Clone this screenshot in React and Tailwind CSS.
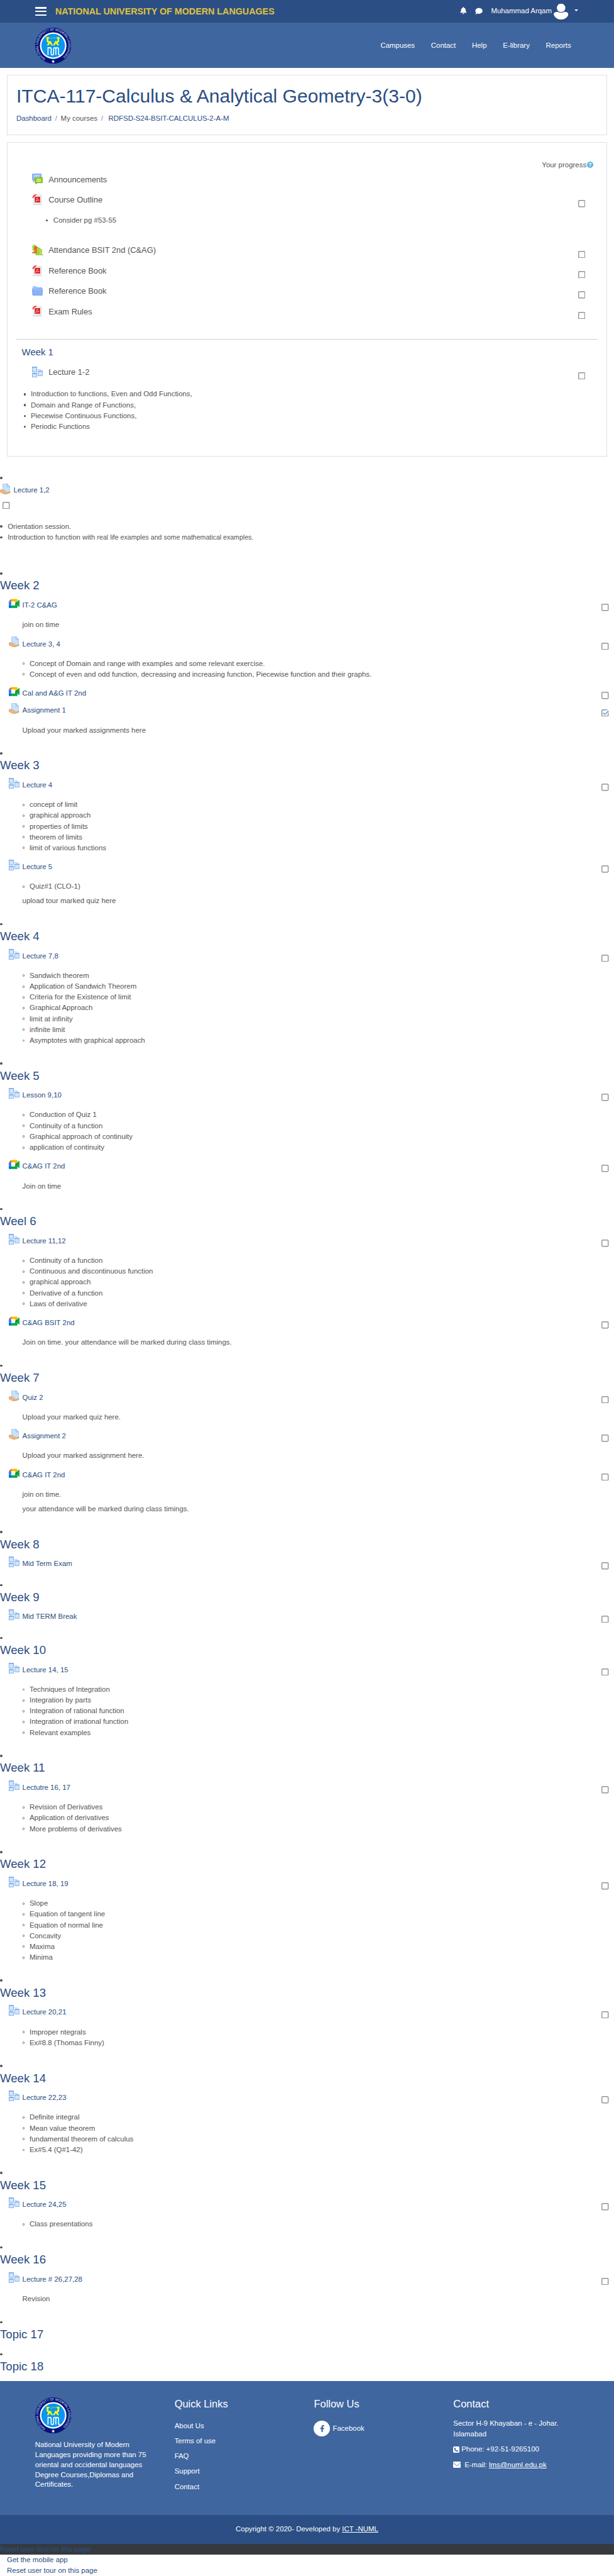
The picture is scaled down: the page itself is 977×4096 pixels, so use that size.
import React from "react";
import { FaBell, FaComment, FaFacebookF } from "react-icons/fa";

/* ---------- icons ---------- */

function LogoSeal() {
  return (
    <svg viewBox="0 0 80 80" className="block h-[80px] w-[80px] shrink-0">
      <defs>
        <path id="ring" d="M22.6 68.6 A33.5 33.5 0 1 1 57.4 68.6" />
      </defs>
      <circle cx="40" cy="40" r="40" fill="#06127a" />
      <circle cx="40" cy="40" r="29.5" fill="#fff" />
      <circle cx="40" cy="40" r="26.3" fill="#0a96f2" />
      <text fill="#dfe6f5" fontSize="7.3" fontFamily="Liberation Sans, sans-serif" fontWeight="400">
        <textPath href="#ring" textLength="168" lengthAdjust="spacing">
          NATIONAL UNIVERSITY OF MODERN LANGUAGES
        </textPath>
      </text>
      <path
        d="M40 71 l1 2.9 h3 l-2.4 1.8 .9 2.9 -2.5-1.8 -2.5 1.8 .9-2.9 -2.4-1.8 h3z"
        fill="#fff"
      />
      <g fill="#ffff00">
        <path d="M25 21 h6 v2.5 h-1.5 v6.5 h6 v2.5 l4 7 h-3.5 l-3-4.5 -3.5 4.5 h-3.5 l3-5.5 -3-2.5z" />
        <path d="M54 21 h-6 v2.5 h1.5 v6.5 h-6 v2.5 l-4 7 h3.5 l3-4.5 3.5 4.5 h3.5 l-3-5.5 3-2.5z" />
      </g>
      <path d="M31 22.5 q4 3 8.5 0.5 t8.5 0" fill="none" stroke="#d8f000" strokeWidth="0.9" />
      <path
        d="M28.5 60.5 V44.5 H33.5 Q35.5 44.5 35.5 47 V57.5 Q35.5 60.5 38 60.5 Q41 60.5 41 57.5 V47 Q41 44.5 43.5 44.5 Q46 44.5 46 47 V60.5 M46 47 Q46 44.5 48.5 44.5 Q52 44.5 52 47 V59 Q52 60.5 55 60.3"
        fill="none"
        stroke="#fff"
        strokeWidth="2.3"
      />
    </svg>
  );
}

const ICON = "block h-[24px] w-[24px] shrink-0";

function BookIcon() {
  return (
    <svg viewBox="0 0 24 24" className={ICON}>
      <path d="M11 6.5 H18.5 V9 M5.5 11 V15" fill="none" stroke="#9cc0f2" strokeWidth="1.2" />
      <g fill="#cfe6fb" stroke="#6495e6" strokeWidth="1">
        <rect x="0.5" y="0.5" width="10" height="11" />
        <rect x="13.5" y="9.5" width="10" height="10.5" />
        <rect x="0.5" y="14.5" width="10" height="9" />
      </g>
      <path d="M1 1.5h9M14 10.5h9M1 15.5h9" stroke="#7fa9ee" strokeWidth="1.6" />
    </svg>
  );
}

function HandIcon() {
  return (
    <svg viewBox="0 0 24 24" className={ICON}>
      <path d="M6.5 0.5 H16 L21.5 6.5 V21 H6.5z" fill="#c6e3fb" stroke="#8fb8ec" />
      <path d="M16 0.5 V6.5 H21.5z" fill="#eaf5ff" stroke="#6f9fe6" />
      <path
        d="M0.5 14 Q3 13.3 6 14 L13 17 Q15.5 18.3 13.5 19 L10 18.6 L14 20 Q19 18 23.2 18.6 Q23.5 19.8 20 21 Q14 24.5 9 23 L0.5 19z"
        fill="#efb57c"
        stroke="#c98d50"
        strokeWidth="0.8"
      />
      <path d="M9.5 17.5 Q13 17 15 19.5" fill="none" stroke="#fbe0c2" strokeWidth="1" />
    </svg>
  );
}

function MeetIcon() {
  return (
    <svg viewBox="0 0 24 24" className={ICON}>
      <path d="M0 7.5 L5.5 2 V7.5z" fill="#ea4335" />
      <path d="M5.5 2 H17.5 Q19.3 2 19.3 3.8 V8 L14 12 V7.5 H5.5z" fill="#ffba00" />
      <path d="M0 7.5 H5.5 V16.5 H0z" fill="#2684fc" />
      <path d="M0 16.5 H5.5 V22 H1.7 Q0 22 0 20.3z" fill="#0066da" />
      <path d="M5.5 16.5 H14 V12 L19.3 16.5 V20.3 Q19.3 22 17.5 22 H5.5z" fill="#00ac47" />
      <path d="M14 12 L19.3 7.5 V16.5z" fill="#00832d" />
      <path d="M19.3 7.5 L22.7 4.6 Q24 3.9 24 5.3 V18.7 Q24 20.1 22.7 19.4 L19.3 16.5z" fill="#00ac47" />
    </svg>
  );
}

function PdfIcon() {
  return (
    <svg viewBox="0 0 24 24" className={ICON}>
      <path d="M2 1 H22 V18 L16.5 23 H2z" fill="#e9e9ee" />
      <path d="M2 22.5 H18 L22 21.5 V23.5 H2z" fill="#c9c9ce" />
      <path d="M22 18 L16.5 23 V18z" fill="#fff" stroke="#bdbdc4" strokeWidth="0.6" />
      <path d="M1 8.5 V6 Q3 1 8 0 H11 L1 9z" fill="#ee4036" />
      <rect x="6" y="5.5" width="12" height="12.5" fill="#dd1f1f" />
      <path
        d="M11.5 7.5 Q12 11 15.8 13.8 Q11 12.6 8 15.5 Q11.5 12 11.5 7.5z"
        fill="none"
        stroke="#fff"
        strokeWidth="0.8"
      />
    </svg>
  );
}

function FolderIcon() {
  return (
    <svg viewBox="0 0 24 24" className={ICON}>
      <path d="M2.5 10 V2.5 H9.5 L11.5 4.5 H21.5 V10z" fill="#a9c9fa" stroke="#6b9bea" />
      <path d="M0.5 7.5 H23.5 L22.5 21.5 H1.5z" fill="#8bb2f6" stroke="#5f8fe2" />
      <path d="M1.5 8.7 H22.5" stroke="#c2d9fd" />
    </svg>
  );
}

function ForumIcon() {
  return (
    <svg viewBox="0 0 24 24" className={ICON}>
      <path d="M1.5 0.5 H20.5 V14 H6 L2.5 18.5 V14 H0.5 V1.5z" fill="#8fb6f8" stroke="#6b9bea" />
      <path d="M4 4.5H17M4 7.5H17" stroke="#fff" strokeWidth="1.2" />
      <path
        d="M7.5 8.5 H22.5 Q23.5 8.5 23.5 9.5 V20.5 H12 L8.5 23.5 V20.5 H6.5 V9.5z"
        fill="#8ccb12"
        stroke="#6ba50e"
      />
      <path d="M10 12.5H20M10 15H20M10 17.5H20" stroke="#fff" strokeWidth="1.2" />
    </svg>
  );
}

function AttendanceIcon() {
  return (
    <svg viewBox="0 0 24 24" className={ICON}>
      <g stroke="#79ae1c" strokeWidth="0.9">
        <path d="M0.5 12 L2.5 9 Q0.5 6 1.5 3 Q4.5 -1 7.5 2 Q9 5 7.5 9 L9 12z" fill="#a8dd3c" />
        <path
          d="M0.5 18.5 L1.5 16.5 L6 15 Q4 10 5.5 5 Q8.5 1.5 11.5 5 Q12.5 10 10 14 L14 18z"
          fill="#ee6a1e"
          stroke="#d4570f"
        />
        <path d="M6 21 L11 18.5 Q9 13 11 8 Q14 4.5 17 8 V19 L17 21z" fill="#a8dd3c" />
        <path
          d="M9 23.5 Q10 20.5 16 19.5 Q13.5 14 15 11 Q18.5 7 21.5 11 Q23 15 20.5 19.5 Q23 20 23.5 23.5z"
          fill="#b4e34b"
        />
      </g>
    </svg>
  );
}

const ICONS = {
  book: BookIcon,
  hand: HandIcon,
  meet: MeetIcon,
  pdf: PdfIcon,
  folder: FolderIcon,
  forum: ForumIcon,
  people: AttendanceIcon,
};

/* ---------- small parts ---------- */

function Check({ on, className }) {
  return (
    <span className={"block h-[16px] w-[16px] shrink-0 " + className}>
      <svg viewBox="0 0 16 16" className="block h-full w-full">
        <rect x="1" y="1" width="14" height="14" rx="1.5" fill="#fff" stroke="#949494" strokeWidth="2" />
        {on && (
          <>
            <path d="M13 0 h3 v8 h-3z" fill="#fff" />
            <path d="M3.8 7.5 L7.3 11 L15.5 3.8" fill="none" stroke="#76a1f0" strokeWidth="2.5" />
          </>
        )}
      </svg>
    </span>
  );
}

function Disc() {
  return <span className="block h-[5px] w-[5px] shrink-0 rounded-full bg-[#505050]" />;
}

function DiscItem({ gap, children }) {
  return (
    <li className={"flex h-[24px] items-center " + gap}>
      <Disc />
      <span>{children}</span>
    </li>
  );
}

function CardRow({ icon, title, check = true }) {
  const Icon = ICONS[icon];
  return (
    <div className="flex h-[45.33px] items-start pr-[48px] pl-[55px]">
      <div className="pt-[5px]">
        <Icon />
      </div>
      <span className="flex-1 pt-[4px] pl-[12.5px] text-[18px] leading-[27px]">{title}</span>
      {check && <Check className="mt-[18px]" />}
    </div>
  );
}

function Activity({ icon, title, on, items, notes }) {
  const Icon = ICONS[icon];
  const hasBody = items || notes;
  return (
    <div>
      <div className={"flex items-start pr-[11.5px] pl-[19px] " + (hasBody ? "h-[51.4px]" : "h-[38px]")}>
        <div className="pt-[3.6px]">
          <Icon />
        </div>
        <a className="flex-1 pt-[7.8px] pl-[6.7px] leading-[24px] text-[#2a4d82]">{title}</a>
        <Check on={on} className="mt-[16.4px]" />
      </div>
      {hasBody && (
        <div className="flex flex-col gap-[8px] pb-[10.6px] pl-[49.7px]">
          {items && (
            <ul>
              {items.map((t) => (
                <li key={t} className="flex h-[24px] items-center gap-[11px]">
                  <span className="block h-[5.5px] w-[5px] rounded-full border border-[#666]" />
                  <span>{t}</span>
                </li>
              ))}
            </ul>
          )}
          {notes && notes.map((t) => <p key={t}>{t}</p>)}
        </div>
      )}
    </div>
  );
}

function Section({ title, acts }) {
  return (
    <section className="pb-[16.6px]">
      <div className="flex h-[24px] items-center">
        <Disc />
      </div>
      <h3 className="h-[31.2px] text-[26px] leading-[31.2px] text-[#2a4d82]">{title}</h3>
      {acts && (
        <div className="pt-[8px]">
          {acts.map((a, i) => (
            <Activity key={i} {...a} />
          ))}
        </div>
      )}
    </section>
  );
}

/* ---------- content ---------- */

const SECTIONS = [
  {
    title: "Week 2",
    acts: [
      { icon: "meet", title: "IT-2 C&AG", notes: ["join on time"] },
      {
        icon: "hand",
        title: "Lecture 3, 4",
        items: [
          "Concept of Domain and range with examples and some relevant exercise.",
          "Concept of even and odd function, decreasing and increasing function, Piecewise function and their graphs.",
        ],
      },
      { icon: "meet", title: "Cal and A&G IT 2nd" },
      { icon: "hand", title: "Assignment 1", on: true, notes: ["Upload your marked assignments here"] },
    ],
  },
  {
    title: "Week 3",
    acts: [
      {
        icon: "book",
        title: "Lecture 4",
        items: ["concept of limit", "graphical approach", "properties of limits", "theorem of limits", "limit of various functions"],
      },
      { icon: "book", title: "Lecture 5", items: ["Quiz#1 (CLO-1)"], notes: ["upload tour marked quiz here"] },
    ],
  },
  {
    title: "Week 4",
    acts: [
      {
        icon: "book",
        title: "Lecture 7,8",
        items: [
          "Sandwich theorem",
          "Application of Sandwich Theorem",
          "Criteria for the Existence of limit",
          "Graphical Approach",
          "limit at infinity",
          "infinite limit",
          "Asymptotes with graphical approach",
        ],
      },
    ],
  },
  {
    title: "Week 5",
    acts: [
      {
        icon: "book",
        title: "Lesson 9,10",
        items: ["Conduction of Quiz 1", "Continuity of a function", "Graphical approach of continuity", "application of continuity"],
      },
      { icon: "meet", title: "C&AG IT 2nd", notes: ["Join on time"] },
    ],
  },
  {
    title: "Weel 6",
    acts: [
      {
        icon: "book",
        title: "Lecture 11,12",
        items: [
          "Continuity of a function",
          "Continuous and discontinuous function",
          "graphical approach",
          "Derivative of a function",
          "Laws of derivative",
        ],
      },
      { icon: "meet", title: "C&AG BSIT 2nd", notes: ["Join on time. your attendance will be marked during class timings."] },
    ],
  },
  {
    title: "Week 7",
    acts: [
      { icon: "hand", title: "Quiz 2", notes: ["Upload your marked quiz here."] },
      { icon: "hand", title: "Assignment 2", notes: ["Upload your marked assignment here."] },
      {
        icon: "meet",
        title: "C&AG IT 2nd",
        notes: ["join on time.", "your attendance will be marked during class timings."],
      },
    ],
  },
  { title: "Week 8", acts: [{ icon: "book", title: "Mid Term Exam" }] },
  { title: "Week 9", acts: [{ icon: "book", title: "Mid TERM Break" }] },
  {
    title: "Week 10",
    acts: [
      {
        icon: "book",
        title: "Lecture 14, 15",
        items: [
          "Techniques of Integration",
          "Integration by parts",
          "Integration of rational function",
          "Integration of irrational function",
          "Relevant examples",
        ],
      },
    ],
  },
  {
    title: "Week 11",
    acts: [
      {
        icon: "book",
        title: "Lectutre 16, 17",
        items: ["Revision of Derivatives", "Application of derivatives", "More problems of derivatives"],
      },
    ],
  },
  {
    title: "Week 12",
    acts: [
      {
        icon: "book",
        title: "Lecture 18, 19",
        items: ["Slope", "Equation of tangent line", "Equation of normal line", "Concavity", "Maxima", "Minima"],
      },
    ],
  },
  {
    title: "Week 13",
    acts: [{ icon: "book", title: "Lecture 20,21", items: ["Improper ntegrals", "Ex#8.8 (Thomas Finny)"] }],
  },
  {
    title: "Week 14",
    acts: [
      {
        icon: "book",
        title: "Lecture 22,23",
        items: ["Definite integral", "Mean value theorem", "fundamental theorem of calculus", "Ex#5.4 (Q#1-42)"],
      },
    ],
  },
  { title: "Week 15", acts: [{ icon: "book", title: "Lecture 24,25", items: ["Class presentations"] }] },
  { title: "Week 16", acts: [{ icon: "book", title: "Lecture # 26,27,28", notes: ["Revision"] }] },
  { title: "Topic 17" },
  { title: "Topic 18" },
];

/* ---------- page blocks ---------- */

function Header() {
  return (
    <header className="text-white">
      <div className="flex h-[50px] items-start bg-[#2b4f84] pl-[78px]">
        <div className="mt-[16px] flex w-[25px] flex-col gap-[5px]">
          <span className="h-[3px] rounded-[1px] bg-white" />
          <span className="h-[3px] rounded-[1px] bg-white" />
          <span className="h-[3px] rounded-[1px] bg-white" />
        </div>
        <span className="ml-[20px] flex-1 pt-[10.5px] text-[20px] leading-[30px] font-bold whitespace-nowrap text-[#e0c23f]">
          NATIONAL UNIVERSITY OF MODERN LANGUAGES
        </span>
        <FaBell className="mt-[16px] h-[16px] w-[15px]" />
        <FaComment className="mt-[17px] ml-[19px] h-[16px] w-[17px]" />
        <span className="ml-[18px] pt-[12px] leading-[24px] whitespace-nowrap">Muhammad Arqam</span>
        <svg viewBox="0 0 33 35" className="mt-[8px] ml-[4px] h-[35px] w-[33px]" fill="#fff">
          <circle cx="16.5" cy="9" r="9.5" />
          <path d="M8 18 Q16.5 22 25 18 Q33 18.5 33 24 Q28 35 16.5 35 Q5 35 0 24 Q0 18.5 8 18z" />
        </svg>
        <span className="mt-[21px] mr-[79px] ml-[14px] h-0 w-0 border-x-[4.2px] border-t-[4.5px] border-x-transparent border-t-white" />
      </div>
      <div className="h-px bg-white" />
      <div className="flex h-[100px] items-start justify-between bg-[#3f669f] pt-[10px] pr-[95.5px] pl-[78px]">
        <LogoSeal />
        <nav className="flex gap-[36px] pt-[28px] leading-[24px]">
          <a>Campuses</a>
          <a>Contact</a>
          <a>Help</a>
          <a>E-library</a>
          <a>Reports</a>
        </nav>
      </div>
    </header>
  );
}

function TitleCard() {
  return (
    <div className="mx-[15px] mt-[16px] h-[133px] border border-[#dee2e6] px-[20px] pt-[20px]">
      <h1 className="text-[42px] leading-[50px] whitespace-nowrap text-[#2a4d82]">
        ITCA-117-Calculus &amp; Analytical Geometry-3(3-0)
      </h1>
      <div className="mt-[13px] flex leading-[24px] text-[#2a4d82]">
        <a>Dashboard</a>
        <span className="px-[8px] text-[#868e96]">/</span>
        <span className="text-[#555]">My courses</span>
        <span className="pr-[12px] pl-[8px] text-[#868e96]">/</span>
        <a>RDFSD-S24-BSIT-CALCULUS-2-A-M</a>
      </div>
    </div>
  );
}

function MainCard() {
  return (
    <div className="mx-[15px] mt-[16px] h-[698px] border border-[#dee2e6]">
      <div className="flex items-center justify-end gap-[1px] pt-[37px] pr-[30px]">
        <span>Your progress</span>
        <span className="flex h-[14px] w-[14px] items-center justify-center rounded-full bg-[#5bb6da] text-[12px] leading-[14px] font-bold text-white">
          ?
        </span>
      </div>
      <div className="pt-[3px]">
        <CardRow icon="forum" title="Announcements" check={false} />
        <CardRow icon="pdf" title="Course Outline" />
        <ul className="h-[67px] pt-[6.2px] pl-[85px]">
          <DiscItem gap="gap-[12px]">Consider pg #53-55</DiscItem>
        </ul>
        <CardRow icon="people" title="Attendance BSIT 2nd (C&AG)" />
        <CardRow icon="pdf" title="Reference Book" />
        <CardRow icon="folder" title="Reference Book" />
        <CardRow icon="pdf" title="Exam Rules" />
      </div>
      <div className="mx-[20px] mt-[33px] h-px bg-[#ced2d5]" />
      <h4 className="mt-[17.5px] pl-[32px] text-[20.8px] leading-[25px] text-[#2a4d82]">Week 1</h4>
      <div className="pt-[12.7px]">
        <CardRow icon="book" title="Lecture 1-2" />
      </div>
      <ul className="pt-[9.6px] pl-[36.5px]">
        <DiscItem gap="gap-[10.5px]">Introduction to functions, Even and Odd Functions,</DiscItem>
        <DiscItem gap="gap-[10.5px]">Domain and Range of Functions,</DiscItem>
        <DiscItem gap="gap-[10.5px]">Piecewise Continuous Functions,</DiscItem>
        <DiscItem gap="gap-[10.5px]">Periodic Functions</DiscItem>
      </ul>
    </div>
  );
}

function LooseLecture() {
  return (
    <div className="h-[248.3px] pt-[36.2px]">
      <div className="flex h-[24px] items-center">
        <Disc />
      </div>
      <div className="flex h-[41px] items-start">
        <HandIcon />
        <a className="pt-[4px] pl-[6px] text-[#2a4d82]">Lecture 1,2</a>
      </div>
      <Check className="ml-[6px]" />
      <ul className="pt-[27px]">
        <DiscItem gap="gap-[12px]">Orientation session.</DiscItem>
        <DiscItem gap="gap-[12px]">
          Introduction to function with <span className="text-[14.8px]">real life examples and some mathematical examples.</span>
        </DiscItem>
      </ul>
    </div>
  );
}

function Footer() {
  return (
    <footer className="text-white">
      <div className="flex h-[297px] bg-[#3f669f] pl-[78px]">
        <div className="w-[310px] pt-[36px]">
          <LogoSeal />
          <p className="w-[255px] pt-[15.5px] leading-[22px]">
            National University of Modern Languages providing more than 75 oriental and occidental languages Degree
            Courses,Diplomas and Certificates.
          </p>
        </div>
        <div className="w-[310px] pt-[35.5px]">
          <h5 className="text-[23px] leading-[28px]">Quick Links</h5>
          <ul className="flex flex-col gap-[10px] pt-[23.5px]">
            <li>About Us</li>
            <li>Terms of use</li>
            <li>FAQ</li>
            <li>Support</li>
            <li>Contact</li>
          </ul>
        </div>
        <div className="w-[310px] pt-[35.5px]">
          <h5 className="text-[23px] leading-[28px]">Follow Us</h5>
          <div className="mt-[23.5px] flex items-center gap-[6px]">
            <span className="flex h-[36px] w-[36px] items-center justify-center rounded-full bg-white">
              <FaFacebookF className="h-[16px] w-[16px] text-[#3f669f]" />
            </span>
            <span>Facebook</span>
          </div>
        </div>
        <div className="w-[270px] pt-[35.5px]">
          <h5 className="text-[23px] leading-[28px]">Contact</h5>
          <p className="pt-[18.5px]">
            Sector H-9 Khayaban - e - Johar.
            <br />
            Islamabad
          </p>
          <div className="mt-[10px] flex items-center gap-[4px]">
            <svg viewBox="0 0 14 14" className="h-[14px] w-[14px]">
              <rect width="14" height="14" rx="2.5" fill="#fff" />
              <path
                d="M4.5 2.5 l1.5 2.8 -1 1 q1 1.9 2.7 2.7 l1-1 2.8 1.5 q-.4 2-2.4 2 Q3 10.5 2.5 4.9 q0-2 2-2.4z"
                fill="#3f669f"
              />
            </svg>
            <span>Phone: +92-51-9265100</span>
          </div>
          <div className="mt-[10px] flex items-center">
            <svg viewBox="0 0 17 14" className="mr-[8px] h-[14px] w-[17px]">
              <rect width="17" height="14" rx="2" fill="#fff" />
              <path d="M1 3.5 L8.5 9.5 L16 3.5" fill="none" stroke="#3f669f" strokeWidth="1.2" />
            </svg>
            <span>
              E-mail: <a className="underline">lms@numl.edu.pk</a>
            </span>
          </div>
        </div>
      </div>
      <div className="flex h-[64px] items-start justify-center bg-[#2b4f84] pt-[20.3px]">
        <span>
          Copyright © 2020- Developed by <a className="underline">ICT -NUML</a>
        </span>
      </div>
      <div className="h-[24px] bg-[#363a40] text-[#2b4f84]">Reset user tour on this page</div>
      <div className="h-[47px] bg-white pl-[15.5px] text-[#2a4d82]">
        <div>Get the mobile app</div>
        <div>Reset user tour on this page</div>
      </div>
    </footer>
  );
}

export default function App() {
  return (
    <div className="overflow-hidden bg-white font-['Liberation_Sans',Arial,sans-serif] text-[16px] leading-[24px] text-[#555] [zoom:0.71558]">
      <Header />
      <TitleCard />
      <MainCard />
      <LooseLecture />
      <main className="h-[4029px]">
        {SECTIONS.map((s) => (
          <Section key={s.title} {...s} />
        ))}
      </main>
      <Footer />
    </div>
  );
}
